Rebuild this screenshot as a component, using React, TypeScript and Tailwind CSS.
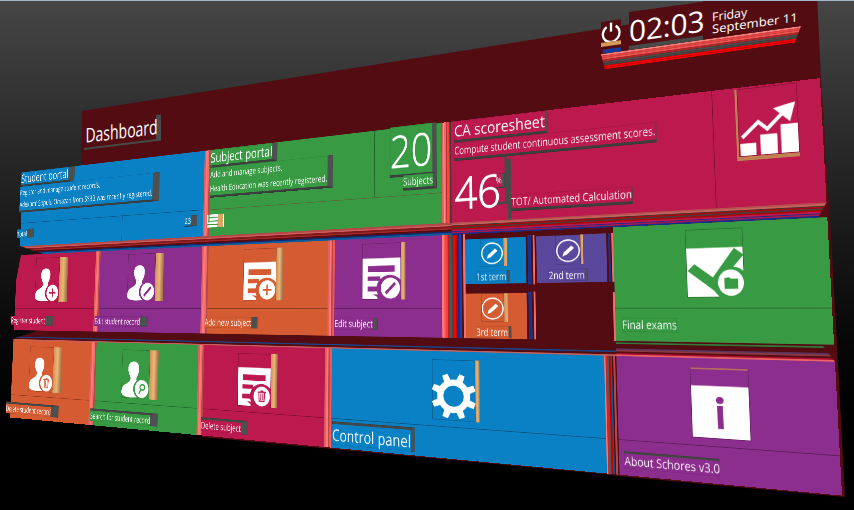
import type { ReactNode } from "react";
import clsx from "clsx";

/* ---------- building blocks ---------- */

/** Text plate with grey depth on its right and lower (or upper) side. */
function Label({ className, children }: { className?: string; children: ReactNode }) {
  return (
    <div className={clsx("w-fit origin-left border-t-[#454746] border-r-[#4e4f4f] border-b-[#3c3f3e] whitespace-nowrap outline-1 -outline-offset-1 outline-black/10", className)}>
      {children}
    </div>
  );
}

/** Stack of coloured layers seen from the side. */
function Layers({ className, colors }: { className: string; colors: string[] }) {
  return (
    <div className={clsx("flex", className)}>
      {colors.map((color, i) => (
        <div key={i} className={clsx("flex-1", color)} />
      ))}
    </div>
  );
}

const SIDE = ["bg-[#e2605f]", "bg-[#fb7a78]", "bg-[#f06b69]", "bg-[#b5484b]"];
const SIDE_RED = ["bg-[#e2605f]", "bg-[#fb7a78]", "bg-[#b5484b]", "bg-[#ff5350]"];

/** Icon on its framed plate, with the wooden side of the plate next to it. */
function Icon({ wood, children }: { wood?: string; children: ReactNode }) {
  return (
    <div className="flex h-[88px]">
      <svg className="w-20 overflow-visible border border-black/25" viewBox="0 0 80 88" preserveAspectRatio="none" fill="white">
        {children}
      </svg>
      {wood && <div className={clsx("bg-linear-to-r from-[#d0935a] via-[#eeb577] to-[#9a7045]", wood)} />}
    </div>
  );
}

function Tile({ className, icon, iconRow = "pt-2", label }: { className: string; icon: ReactNode; iconRow?: string; label: ReactNode }) {
  return (
    <article className={clsx("flex flex-col", className)}>
      <div className={clsx("flex h-[109px] items-start justify-center", iconRow)}>{icon}</div>
      <div className="flex-1 border-t border-black/35">{label}</div>
    </article>
  );
}

/* ---------- drawings ---------- */

function Person() {
  return (
    <path
      transform="translate(34 54) scale(1.06 .66)"
      d="M0 -50 C-11 -50 -16 -40 -15 -27 C-14 -15 -9 -10 -8 -3 C-8 6 -14 9 -20 13 C-29 18 -33 25 -33 38 C-33 46 -22 51 -7 51 L38 48 C38 27 34 18 22 13 C14 9 8 6 8 -3 C10 -11 15 -15 15 -28 C16 -41 11 -50 0 -50Z"
    />
  );
}

function List({ ground }: { ground: string }) {
  return (
    <>
      <path d="M0 23 H80 V88 H0Z" />
      <path d="M12 35 H68 V45 H12Z M11 52 H38 V59 H11Z M11 68 H34 V76 H11Z M22 80 L32 85 V89 H80 V84Z" fill={ground} />
      <ellipse cx="58" cy="71" rx="28" ry="21" fill={ground} />
    </>
  );
}

function Badge({ ground, children }: { ground: string; children: ReactNode }) {
  return (
    <g transform="translate(59 71)">
      <ellipse rx="25" ry="18.5" fill={ground} />
      <ellipse rx="20" ry="16.5" />
      <g stroke={ground} strokeWidth="3" fill="none">
        {children}
      </g>
    </g>
  );
}

const Plus = () => <path d="M0 -9 V9 M-11 0 H11" />;
const Pen = () => <path d="M-10 8 L10 -8" strokeWidth="5" />;
const Trash = () => <path d="M-10 -7 H10 M-3 -9 H4 M-7 -6 L-6 8 H6 L7 -6 M-2 -5 V6 M3 -5 V6" strokeWidth="2.2" />;
const Search = () => (
  <>
    <ellipse cx="2" cy="-3" rx="7" ry="5" />
    <path d="M-2 1 L-8 9" />
  </>
);

function TermIcon({ wood }: { wood: string }) {
  return (
    <div className="flex h-[41px]">
      <svg className="w-[41px] overflow-visible border border-black/20" viewBox="0 0 66 84" preserveAspectRatio="none" fill="white">
        <ellipse cx="33" cy="45" rx="31" ry="32" fill="none" stroke="white" strokeWidth="4" />
        <path d="M-16 17 L-12 5 L9 -15 L17 -8 L-4 12Z" transform="translate(33 45)" />
      </svg>
      <div className={clsx("bg-linear-to-r from-[#d0935a] to-[#e8b073]", wood)} />
    </div>
  );
}

/* ---------- sections ---------- */

function Clock() {
  return (
    <div className="w-[200px] origin-top-left -skew-y-8">
      <div className="flex h-[53px] items-end text-white">
        <div className="flex h-[32px] w-5 flex-col bg-[#530d12]">
          <svg className="h-[21px] w-5" viewBox="0 0 60 63" fill="none" stroke="white" strokeWidth="7">
            <path d="M17 18 A25 25 0 1 0 44 18 M30 6 V33" />
          </svg>
          <div className="h-1 bg-[#d79a58]" />
          <div className="mt-[3px] ml-0.5 h-1 bg-[#143b9b]" />
        </div>
        <div className="ml-2 h-[38px] w-[74px] border-b-4 border-[#484a49] bg-[#530d12] pt-1">
          <div className="w-fit origin-left scale-x-[1.03] text-[29px] leading-[29px] tracking-[-0.005em]">02:03</div>
        </div>
        <div className="h-[60px] flex-1 bg-[#530d12] pt-[33px] pl-[9px] text-[12px] leading-3">
          <div className="w-fit origin-left scale-x-[1.03]">Friday</div>
          <div className="w-fit origin-left scale-x-[1.09]">September 11</div>
        </div>
      </div>
      <Layers
        className="h-4 flex-col [clip-path:polygon(0_0,100%_0,97%_100%,2%_100%)]"
        colors={["bg-[#f6817d]", "bg-[#e84543]", "bg-[#ee5552]", "bg-[#ad2929]", "bg-[#4b4b4b]", "bg-[#454545]", "bg-[#f00000]", "bg-[#e80000]"]}
      />
    </div>
  );
}

function Header() {
  return (
    <header className="flex items-start justify-between pr-[53px] pl-[84px] [grid-area:1/1]">
      <h1 className="mt-[123px] w-[77px] origin-top-left -skew-y-7 border-r-[5px] border-b-2 border-[#484949] bg-[#530d12] text-[20px] leading-6 text-white">
        <div className="w-fit origin-left scale-x-[.7] pl-0.5">Dashboard</div>
      </h1>
      <Clock />
    </header>
  );
}

function StudentPortal() {
  return (
    <article className="ml-2 flex w-[562px] flex-col bg-[#0a80c5]">
      <div className="h-[106px]">
        <Label className="-ml-1.5 scale-x-[1.01] border-r-[20px] border-b-4 bg-[#0a80c5] text-[24px] leading-[26px]">Student portal</Label>
        <Label className="-ml-2 scale-x-[1.01] border-r-[19px] border-b-4 bg-[#0a80c5] text-[15px] leading-[25px]">
          <p>Register and manage student records.</p>
          <p>Adekom' Sopulu Omazan from SS3B was recently registered.</p>
        </Label>
      </div>
      <div className="flex flex-1 border-t border-black/35 text-[15px] leading-[18px]">
        <div className="w-[333px] border-r border-black/35 pt-3">
          <Label className="-ml-3 border-r-[24px] bg-[#0a80c5]">Total</Label>
        </div>
        <div className="flex flex-1 justify-end pt-2 pr-4">
          <Label className="h-fit border-r-[17px] border-b-2 bg-[#0a80c5]">23</Label>
        </div>
      </div>
    </article>
  );
}

function SubjectPortal() {
  return (
    <article className="flex w-[523px] flex-col bg-[#389a42]">
      <div className="flex h-[107px]">
        <div className="w-[388px] border-r border-black/35">
          <Label className="scale-x-[1.01] border-r-[12px] border-b-4 bg-[#389a42] text-[24px] leading-[28px]">Subject portal</Label>
          <Label className="scale-x-[.985] border-r-[12px] border-b-4 bg-[#389a42] text-[15px] leading-[25px]">
            <p>Add and manage subjects.</p>
            <p>Health Education was recently registered.</p>
          </Label>
        </div>
        <div className="flex flex-1 flex-col items-end pr-2.5">
          <Label className="-mt-0.5 origin-right scale-x-[1.06] border-r-[8px] border-b-4 bg-[#389a42] text-[70px] leading-[76px] font-light [-webkit-text-stroke:1px_white]">
            20
          </Label>
          <Label className="-mt-0.5 origin-right scale-x-[.95] border-r-[8px] border-b-4 bg-[#389a42] text-[16px] leading-[20px]">Subjects</Label>
        </div>
      </div>
      <div className="flex-1 border-t border-[#6b4a35]/70 pt-2">
        <div className="-ml-1.5 flex h-[23px]">
          <svg className="w-7" viewBox="0 0 28 37" preserveAspectRatio="none" fill="white">
            <path d="M0 0 H28 V37 H0Z" />
            <path d="M6 9 H28 M6 19 H28 M0 29 H28 M5 0 V23" stroke="#389a42" strokeWidth="3" />
          </svg>
          <div className="w-4 border-r-2 border-white bg-[#dca365]" />
        </div>
      </div>
    </article>
  );
}

function Scoresheet() {
  return (
    <article className="flex flex-1 bg-[#bc194f] text-white">
      <div className="flex flex-1 flex-col pl-1.5">
        <Label className="scale-x-[1.03] border-r-[4px] border-b-4 bg-[#bc194f] text-[24px] leading-[29px]">CA scoresheet</Label>
        <Label className="scale-x-[.925] border-r-[2px] border-b-4 bg-[#bc194f] text-[16px] leading-[24px]">
          Compute student continuous assessment scores.
        </Label>
        <div className="flex flex-1">
          <div className="w-[88px] pt-[9px] text-[66px] leading-[76px] font-light [-webkit-text-stroke:1.5px_white]">
            <div className="w-fit origin-left scale-x-[1.12]">46</div>
          </div>
          <div className="-ml-3 h-[70px] border-r-[5px] border-b-4 border-[#484949] pt-[24px]">
            <Label className="border-r-[5px] border-b-2 bg-[#bc194f] text-[13px] leading-[20px]">%</Label>
          </div>
          <div className="mt-1 w-1.5 bg-[#484949]" />
          <Label className="mb-3 scale-x-[.97] self-end border-r border-b-4 text-[15.5px] leading-[20px]">TOT/ Automated Calculation</Label>
        </div>
      </div>
      <div className="w-[145px] border-l border-black/35 pt-0.5 pl-[31px]">
        <div className="w-fit border-b-[5px] border-l-[3px] border-[#c18050]">
          <Icon>
            <path d="M1 72 H23 V88 H1Z M29 62 H52 V88 H29Z M57 51 H80 V88 H57Z" />
            <path d="M4 64 L27 45 L39 55 L63 34" fill="none" stroke="white" strokeWidth="5" />
            <path d="M48 29 L78 23 L70 48Z" />
          </Icon>
        </div>
      </div>
    </article>
  );
}

function Term({ className, wood, children }: { className: string; wood: string; children: string }) {
  return (
    <div className={clsx("flex flex-col items-center pr-1.5", className)}>
      <TermIcon wood={wood} />
      <Label className="mt-1.5 origin-center scale-x-[.94] border-r-[5px] px-px text-[14.5px] leading-[17px]">{children}</Label>
    </div>
  );
}

function TermEdge() {
  return <Layers className="-my-0.5 w-3" colors={["bg-[#16328f]", "bg-[#16328f]", "bg-[#530d12]", "bg-[#f06b69]"]} />;
}

function Terms() {
  return (
    <article className="flex w-[251px] flex-col gap-[14px] bg-[#530d12] pt-[8px]">
      <div className="flex h-[67px] gap-[3px]">
        <Term className="w-[108px] bg-[#0a80c5]" wood="w-1.5">1st term</Term>
        <TermEdge />
        <Term className="flex-1 bg-[#5a489d]" wood="w-1">2nd term</Term>
        <Layers className="w-2" colors={["bg-[#16328f]", "bg-[#530d12]", "bg-[#f06b69]"]} />
      </div>
      <div className="flex h-[66px] gap-[3px]">
        <Term className="w-[108px] bg-[#d55c32]" wood="w-1.5">3rd term</Term>
        <TermEdge />
        <div className="flex-1" />
        <Layers className="w-2" colors={["bg-[#530d12]", "bg-[#530d12]", "bg-[#f06b69]"]} />
      </div>
    </article>
  );
}

function Board() {
  return (
    <div className="flex h-[500px] w-[1700px] origin-top-left transform-[matrix3d(0.273324,-0.0740023,0,-0.000239849,-0.022578,0.465912,0,-0.000057764,0,0,1,0,21,171.5,0,1)] flex-col text-white [grid-area:1/1]">
      <div className="flex h-[154px]">
        <StudentPortal />
        <Layers className="w-4" colors={SIDE} />
        <SubjectPortal />
        <Layers
          className="w-[18px]"
          colors={["bg-[#e2605f]", "bg-[#ff8a86]", "bg-[#f06b69]", "bg-[#b92e30]", "bg-[#ff4442]", "bg-[#e33b39]", "bg-[#453638]"]}
        />
        <Scoresheet />
      </div>

      <div className="flex h-[18px]">
        <Layers
          className="w-[1127px] flex-col [clip-path:polygon(1%_0,100%_0,100%_100%,8%_100%)]"
          colors={["bg-[#b5474a]", "bg-[#cb5f5b]", "bg-[#81191c]", "bg-[#a3282a]", "bg-[#530d12]", "bg-[#14286e]", "bg-[#0a5a9c]"]}
        />
        <Layers
          className="flex-1 flex-col [clip-path:polygon(0_0,100%_0,98%_100%,0_100%)]"
          colors={["bg-[#b5524d]", "bg-[#c8625c]", "bg-[#3f3534]", "bg-[#a80a0c]", "bg-[#4a3a3a]", "bg-[#b00508]", "bg-[#bc194f]", "bg-[#182c8c]", "bg-[#a51a4c]", "bg-[#182c8c]"]}
        />
      </div>

      <div className="flex h-[153px] text-[15.5px] leading-[19px]">
        <Tile
          className="w-[263px] bg-[#bc194f] [clip-path:polygon(5%_0,100%_0,100%_100%,-10%_100%)]"
          iconRow="pt-2 pr-5"
          icon={<Icon wood="w-[27px]"><Person /><Badge ground="#bc194f"><Plus /></Badge></Icon>}
          label={<Label className="mt-3.5 -ml-3 border-r-[26px] bg-[#bc194f]">Register student</Label>}
        />
        <Layers className="w-[15px]" colors={SIDE} />
        <Tile
          className="w-[291px] bg-[#8c2e8d]"
          iconRow="pt-2 pr-5"
          icon={<Icon wood="w-[23px]"><Person /><Badge ground="#8c2e8d"><Pen /></Badge></Icon>}
          label={<Label className="mt-3.5 -ml-3 scale-x-[.98] border-r-[22px] bg-[#8c2e8d]">Edit student record</Label>}
        />
        <Layers className="w-[17px]" colors={SIDE} />
        <Tile
          className="w-[288px] bg-[#d55c32]"
          iconRow="pt-2 pr-3"
          icon={<Icon wood="w-4"><List ground="#d55c32" /><Badge ground="#d55c32"><Plus /></Badge></Icon>}
          label={<Label className="mt-3.5 -ml-1.5 scale-x-[.99] border-r-[15px] bg-[#d55c32]">Add new subject</Label>}
        />
        <Layers className="w-[15px]" colors={SIDE_RED} />
        <Tile
          className="w-[219px] bg-[#8c2e8d]"
          iconRow="pt-2 pr-3"
          icon={<Icon wood="w-[9px]"><List ground="#8c2e8d" /><Badge ground="#8c2e8d"><Pen /></Badge></Icon>}
          label={<Label className="mt-3.5 scale-x-[.98] border-r-[10px] bg-[#8c2e8d]">Edit subject</Label>}
        />
        <Layers
          className="w-[44px]"
          colors={["bg-[#ff7b78]", "bg-[#e85c5a]", "bg-[#ff3a38]", "bg-[#b02426]", "bg-[#555]", "bg-[#454545]", "bg-[#ff0000]", "bg-[#c00000]", "bg-[#10308f]", "bg-[#1a3fa8]", "bg-[#530d12]", "bg-[#f2706e]"]}
        />
        <Terms />
        <Tile
          className="flex-1 bg-[#389a42]"
          iconRow="pt-2 pr-1"
          icon={
            <Icon>
              <path d="M0 24 H80 V88 H0Z" />
              <path d="M1 54 L11 45 L37 63 L68 25 L81 34 L66 50 C74 50 78 53 81 57 V89 H46 L38 80Z" fill="#389a42" />
              <ellipse cx="62" cy="70" rx="18" ry="17" />
              <path d="M53 64 L60 63 L62 65 H72 V78 H53Z" fill="#389a42" />
            </Icon>
          }
          label={<Label className="mt-3 ml-2.5 scale-x-[.95]">Final exams</Label>}
        />
      </div>

      <div className="flex h-[20px]">
        <Layers
          className="w-[1403px] flex-col [clip-path:polygon(6%_0,100%_0,100%_100%,0_100%,0_85%)]"
          colors={["bg-[#530d12]", "bg-[#530d12]", "bg-[#530d12]", "bg-[#530d12]", "bg-[#530d12]", "bg-[#1a4388]", "bg-[#530d12]", "bg-[#c4605b]"]}
        />
        <Layers
          className="flex-1 flex-col [clip-path:polygon(0_0,95%_0,100%_100%,0_100%)]"
          colors={["bg-[#530d12]", "bg-[#2f7a38]", "bg-[#530d12]", "bg-[#530d12]", "bg-[#530d12]", "bg-[#5c3260]", "bg-[#8c3a40]", "bg-[#530d12]", "bg-[#a80f32]", "bg-[#ee6464]"]}
        />
      </div>

      <div className="flex flex-1 text-[15.5px] leading-[19px]">
        <Tile
          className="w-[258px] bg-[#d55c32]"
          iconRow="pt-3 pr-8"
          icon={<Icon wood="w-[27px]"><Person /><Badge ground="#d55c32"><Trash /></Badge></Icon>}
          label={<Label className="mt-3.5 -ml-4 scale-x-[.97] border-t-4 border-r-[26px] bg-[#d55c32]">Delete student record</Label>}
        />
        <Layers className="w-[17px]" colors={SIDE} />
        <Tile
          className="w-[290px] bg-[#389a42]"
          iconRow="pt-3 pr-7"
          icon={<Icon wood="w-[24px]"><Person /><Badge ground="#389a42"><Search /></Badge></Icon>}
          label={<Label className="mt-3.5 -ml-3 scale-x-[.95] border-t-4 border-r-[22px] bg-[#389a42]">Search for student record</Label>}
        />
        <Layers className="w-[15px]" colors={SIDE} />
        <Tile
          className="w-[289px] bg-[#bc194f]"
          iconRow="pt-3 pr-5"
          icon={<Icon wood="w-[15px]"><List ground="#bc194f" /><Badge ground="#bc194f"><Trash /></Badge></Icon>}
          label={<Label className="mt-3.5 -ml-1 scale-x-[.98] border-t-4 border-r-[15px] bg-[#bc194f]">Delete subject</Label>}
        />
        <Layers className="w-[15px]" colors={SIDE_RED} />
        <Tile
          className="w-[500px] bg-[#0a80c5]"
          iconRow="pt-3 pr-1"
          icon={
            <Icon wood="w-2">
              <g transform="translate(40 53) scale(.6 .48)">
                <circle r="42" fill="none" stroke="white" strokeWidth="20" />
                {[22.5, 67.5, 112.5, 157.5, 202.5, 247.5, 292.5, 337.5].map((a) => (
                  <path key={a} d="M-11 -47 L-9 -71 H9 L11 -47Z" transform={`rotate(${a})`} />
                ))}
              </g>
            </Icon>
          }
          label={<Label className="mt-1 ml-0.5 scale-x-[1.02] border-t-4 border-r-[7px] bg-[#0a80c5] text-[25px] leading-[32px]">Control panel</Label>}
        />
        <Layers className="w-[19px]" colors={["bg-[#ff7774]", "bg-[#c52a2b]", "bg-[#555]", "bg-[#c20000]", "bg-[#0a5a9c]", "bg-[#530d12]", "bg-[#b04a4a]", "bg-[#530d12]"]} />
        <Tile
          className="flex-1 bg-[#8c2e8d]"
          iconRow="pt-3 pr-1"
          icon={
            <Icon>
              <path d="M0 22 H80 V88 H0Z" />
              <path d="M0 0 H80" stroke="#c78453" strokeWidth="1.5" />
              <ellipse cx="40" cy="40" rx="5.5" ry="4.5" fill="#8c2e8d" />
              <path d="M36 47 H44 V76 H36Z" fill="#8c2e8d" />
            </Icon>
          }
          label={<Label className="mt-3.5 ml-2 scale-x-[.98] border-t-[3px] bg-[#8c2e8d]">About Schores v3.0</Label>}
        />
      </div>
    </div>
  );
}

export default function App() {
  return (
    <main className="grid h-[510px] w-[854px] grid-cols-[854px] grid-rows-[510px] overflow-hidden border-t border-[#a3b9cb] bg-linear-to-b from-[#464646] to-black font-['Open_Sans','Noto_Sans',sans-serif]">
      <div className="bg-[#530d12] [clip-path:polygon(82px_110px,600px_28px,817px_-6px,821px_78px,830px_218px,837px_344px,845px_496px,617px_475px,604px_473px,332px_448px,202px_436px,196px_300px,98px_250px,80px_240px)] [grid-area:1/1]" />
      <Header />
      <Board />
    </main>
  );
}
